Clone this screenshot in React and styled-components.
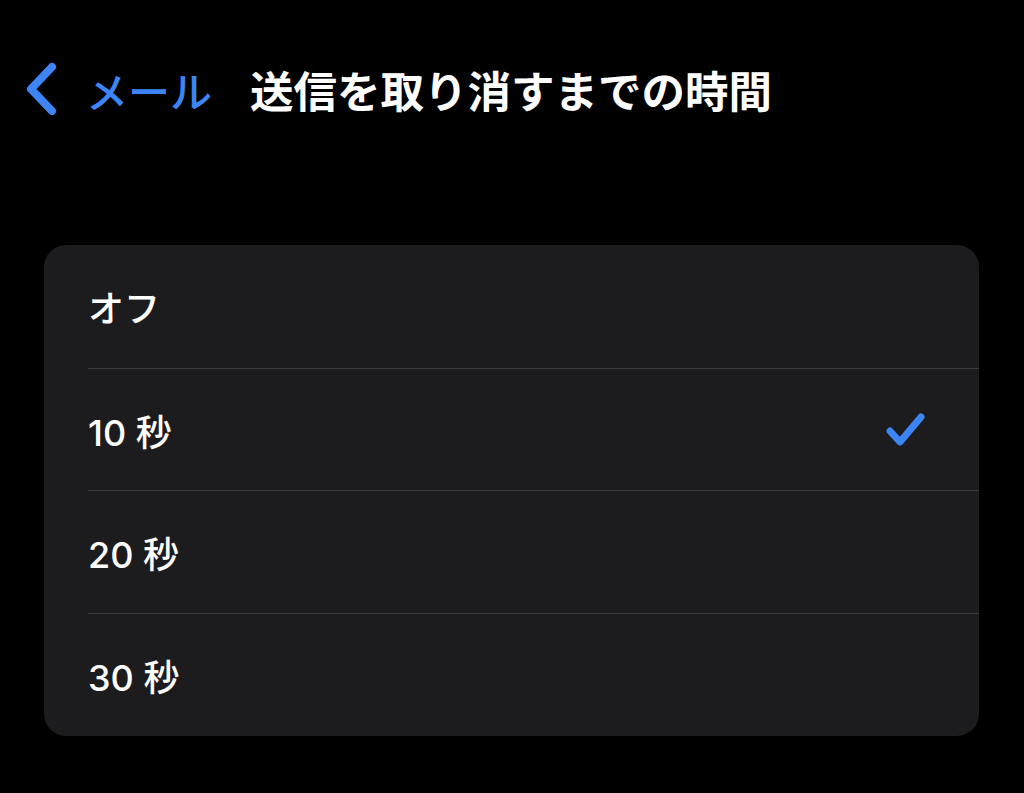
import React, { useState } from "react";
import styled, { createGlobalStyle } from "styled-components";

const GlobalStyle = createGlobalStyle`
	html, body {
		margin: 0;
		padding: 0;
		background: #000;
	}
	body {
		font-family: "Inter", "Noto Sans CJK JP", sans-serif;
		-webkit-font-smoothing: antialiased;
	}
`;

const options = [
	{ id: "off", label: "オフ" },
	{ id: "10", label: "10 秒" },
	{ id: "20", label: "20 秒" },
	{ id: "30", label: "30 秒" },
];

function App() {
	const [selected, setSelected] = useState("10");

	return (
		<>
			<GlobalStyle />
			<Screen>
				<NavBar>
					<BackButton type='button'>
						<svg width='36' height='54' viewBox='0 0 36 54' fill='none'>
							<path
								d='M30 5 L9 27 L30 49'
								stroke='#3d85f5'
								strokeWidth='8'
								strokeLinecap='round'
								strokeLinejoin='round'
							/>
						</svg>
						<BackLabel>メール</BackLabel>
					</BackButton>
					<Title>送信を取り消すまでの時間</Title>
				</NavBar>

				<Group>
					{options.map((opt) => (
						<Row key={opt.id} onClick={() => setSelected(opt.id)}>
							<RowLabel>{opt.label}</RowLabel>
							{selected === opt.id && (
								<svg width='44' height='40' viewBox='0 0 44 40' fill='none'>
									<path
										d='M6 21 L16 32 L37 7'
										stroke='#3d85f5'
										strokeWidth='7'
										strokeLinecap='round'
										strokeLinejoin='round'
									/>
								</svg>
							)}
						</Row>
					))}
				</Group>
			</Screen>
		</>
	);
}

const Screen = styled.div`
	width: 1024px;
	height: 793px;
	background: #000;
	overflow: hidden;
`;

const NavBar = styled.div`
	display: flex;
	align-items: center;
	height: 54px;
	padding: 62px 0 0 22px;
`;

const BackButton = styled.button`
	display: flex;
	align-items: center;
	gap: 28px;
	background: none;
	border: none;
	padding: 0;
	cursor: pointer;
`;

const BackLabel = styled.span`
	font-family: "Noto Sans CJK JP", sans-serif;
	font-size: 42px;
	font-weight: 500;
	color: #3d85f5;
`;

const Title = styled.h1`
	margin: 0 0 0 38px;
	font-family: "Noto Sans CJK JP", sans-serif;
	font-size: 43.5px;
	font-weight: 700;
	color: #fff;
`;

const Group = styled.div`
	margin: 129px 45px 0 44px;
	background: #1c1c1e;
	border-radius: 22px;
	overflow: hidden;
`;

const Row = styled.div`
	display: flex;
	align-items: center;
	justify-content: space-between;
	height: 122.7px;
	margin-left: 44px;
	padding-right: 51px;
	box-sizing: border-box;
	cursor: pointer;

	& + & {
		border-top: 1px solid #3a3a3c;
	}
`;

const RowLabel = styled.span`
	font-size: 36px;
	font-weight: 500;
	color: #fff;
`;

export default App;
